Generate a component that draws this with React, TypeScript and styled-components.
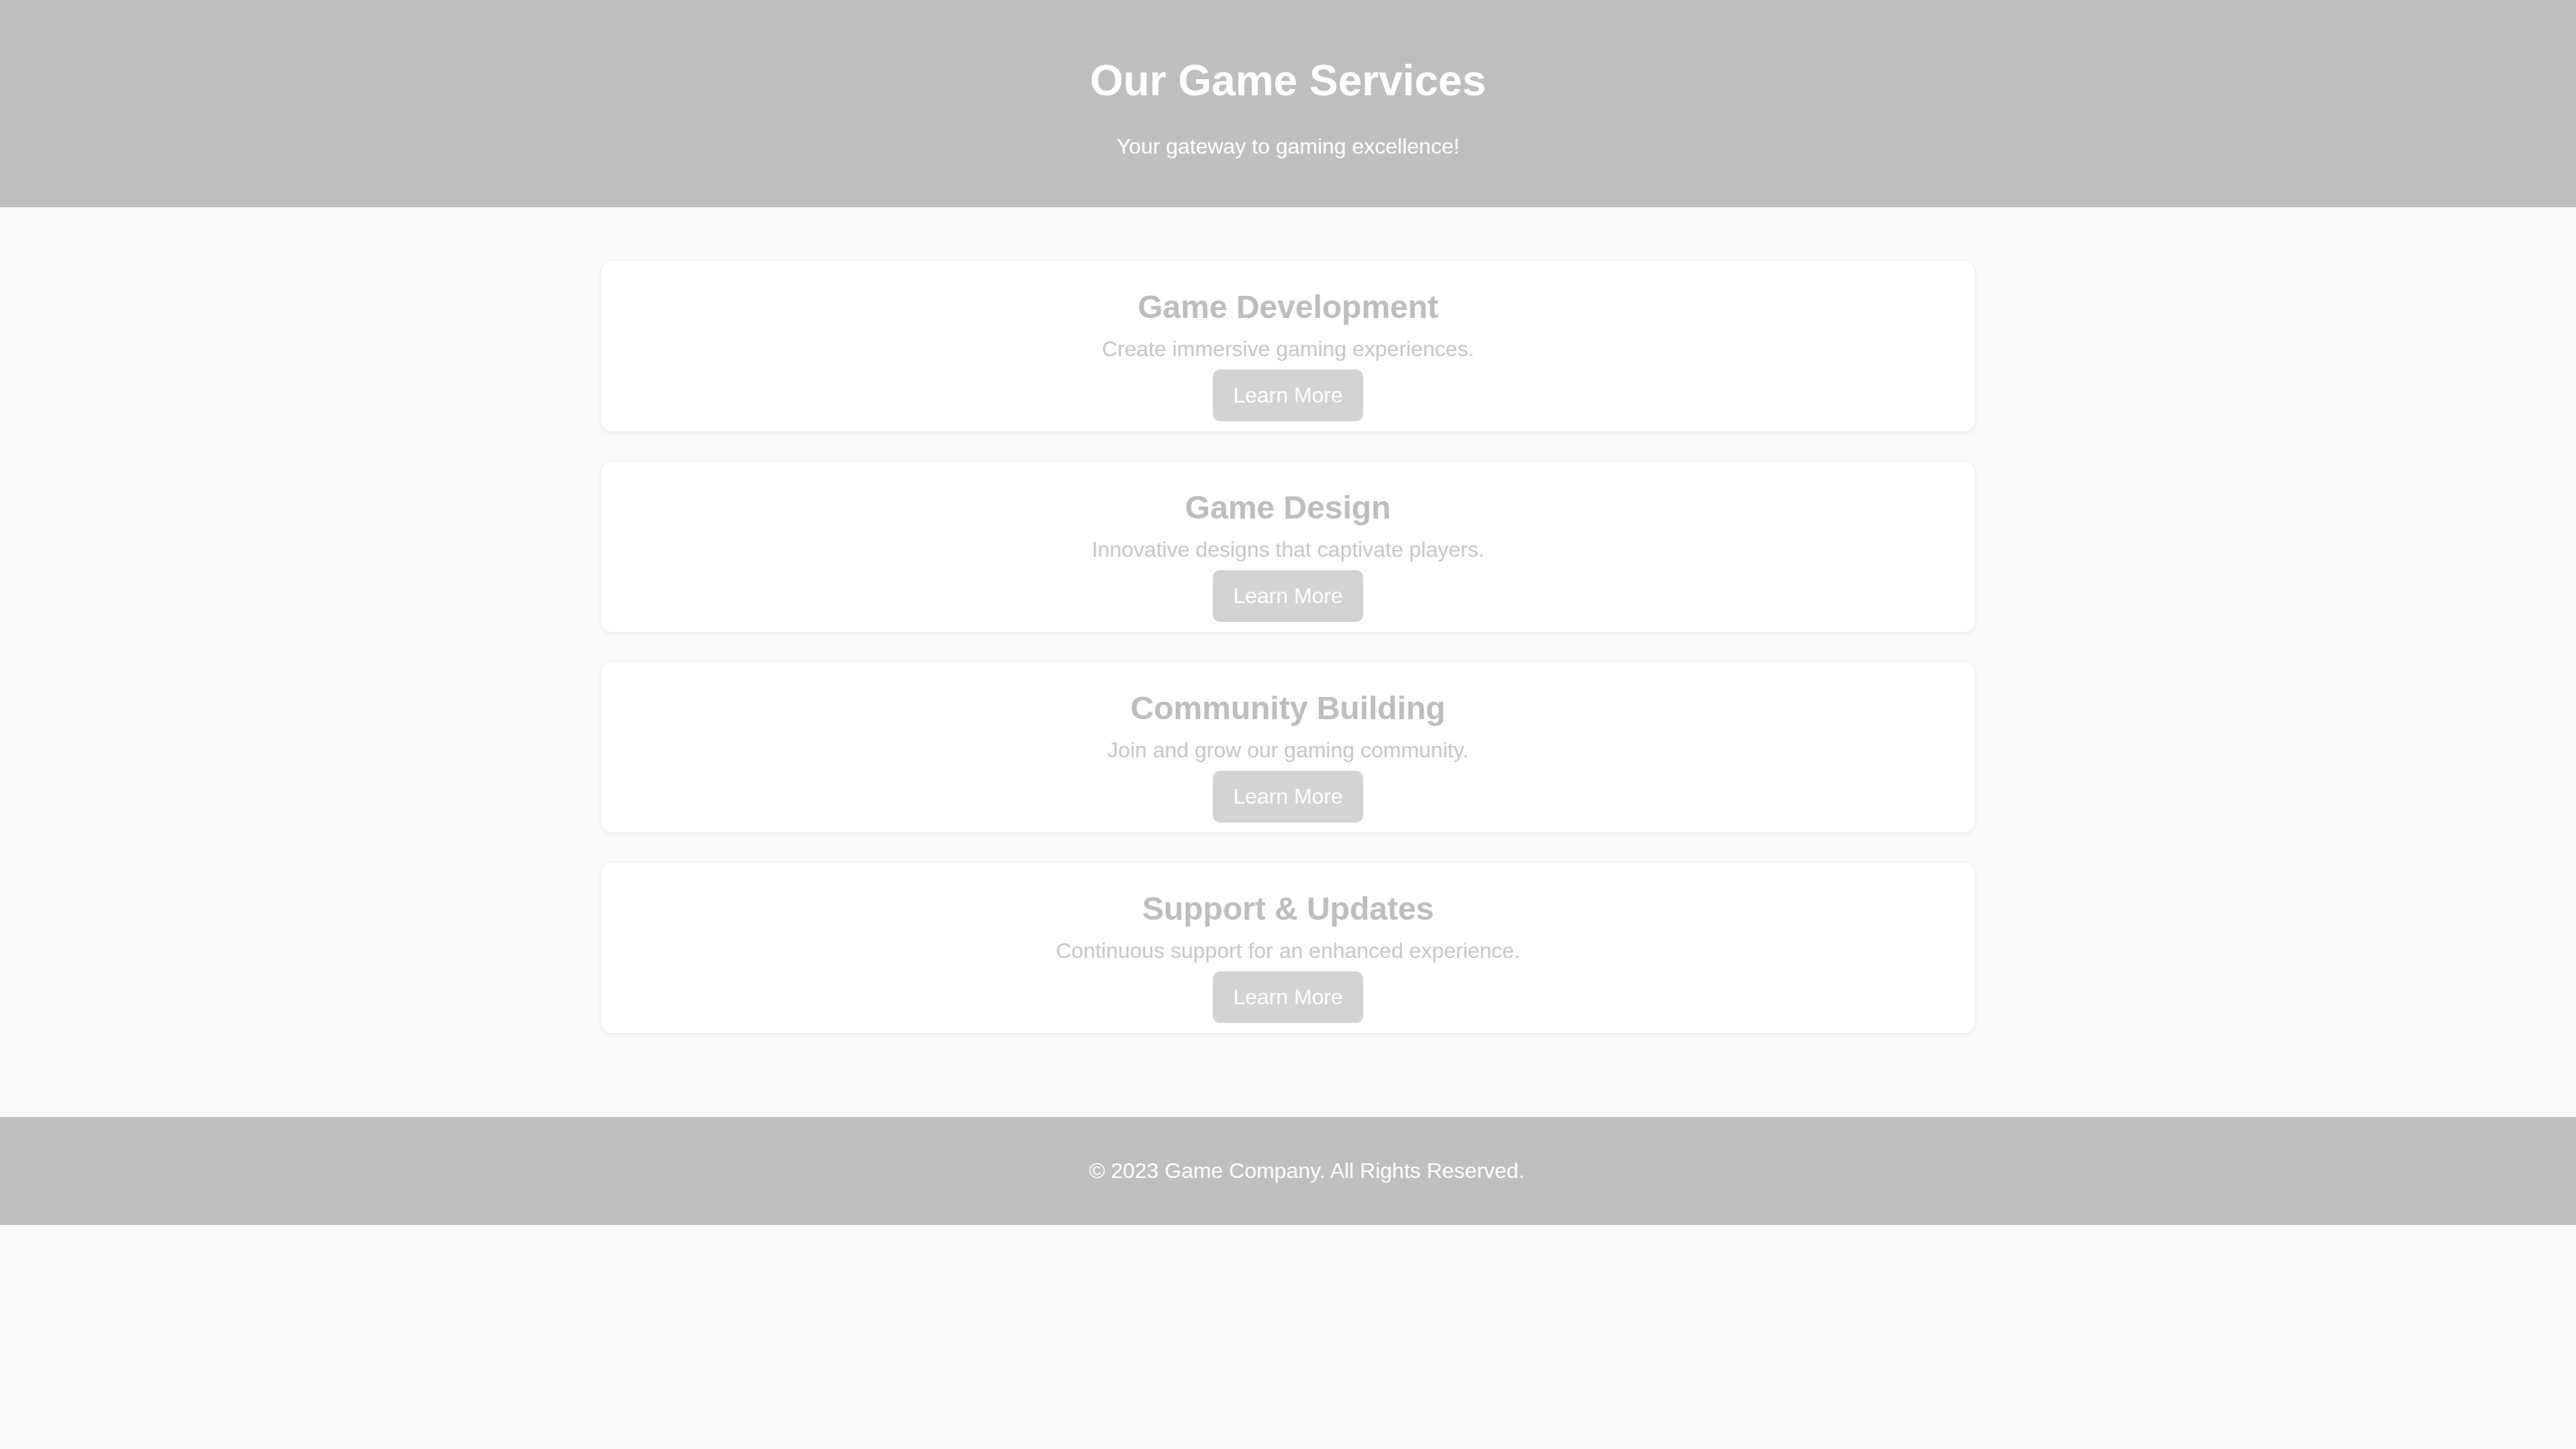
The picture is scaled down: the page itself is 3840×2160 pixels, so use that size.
import React from "react";
import styled, { createGlobalStyle } from "styled-components";

const GlobalStyle = createGlobalStyle`
  html, body {
    margin: 0;
    padding: 0;
    background: #fafafa;
    font-family: "Liberation Sans", Arial, sans-serif;
  }
  * { box-sizing: border-box; }
`;

const Page = styled.div`
  display: flex;
  flex-direction: column;
  width: 100%;
`;

const Header = styled.header`
  background: #bebebe;
  color: #ffffff;
  text-align: center;
  padding: 40px;
`;

const HeaderTitle = styled.h1`
  font-size: 64px;
  font-weight: 700;
  line-height: normal;
  margin: 43px 0;
`;

const HeaderTagline = styled.p`
  font-size: 32px;
  line-height: normal;
  margin: 0 0 32px;
`;

const Main = styled.main`
  display: flex;
  flex-direction: column;
  align-items: center;
  gap: 45px;
  padding: 80px 0 125px;
`;

const Card = styled.section`
  width: 2048px;
  background: #ffffff;
  border-radius: 16px;
  box-shadow: 0 3px 8px rgba(0, 0, 0, 0.06), 0 0 0 1px rgba(0, 0, 0, 0.025);
  padding: 41px 40px 15px;
  display: flex;
  flex-direction: column;
  align-items: center;
  text-align: center;
`;

const CardTitle = styled.h2`
  font-size: 48px;
  font-weight: 700;
  line-height: normal;
  color: #bdbdbd;
  margin: 0 0 17px;
`;

const CardText = styled.p`
  font-size: 32px;
  line-height: normal;
  color: #c7c7c7;
  margin: 0 0 12px;
`;

const LearnButton = styled.button`
  font-family: "Liberation Sans", Arial, sans-serif;
  font-size: 32px;
  line-height: normal;
  color: #ffffff;
  background: #d3d3d3;
  border: none;
  border-radius: 10px;
  padding: 20px 30px;
  cursor: pointer;
`;

const Footer = styled.footer`
  background: #bebebe;
  color: #ffffff;
  text-align: center;
  padding: 30px 30px 30px 86px;
`;

const FooterText = styled.p`
  font-size: 32px;
  line-height: normal;
  margin: 32px 0;
`;

const services = [
  { title: "Game Development", text: "Create immersive gaming experiences." },
  { title: "Game Design", text: "Innovative designs that captivate players." },
  { title: "Community Building", text: "Join and grow our gaming community." },
  { title: "Support & Updates", text: "Continuous support for an enhanced experience." },
];

export default function App() {
  return (
    <>
      <GlobalStyle />
      <Page>
        <Header>
          <HeaderTitle>Our Game Services</HeaderTitle>
          <HeaderTagline>Your gateway to gaming excellence!</HeaderTagline>
        </Header>
        <Main>
          {services.map((s) => (
            <Card key={s.title}>
              <CardTitle>{s.title}</CardTitle>
              <CardText>{s.text}</CardText>
              <LearnButton type="button">Learn More</LearnButton>
            </Card>
          ))}
        </Main>
        <Footer>
          <FooterText>© 2023 Game Company. All Rights Reserved.</FooterText>
        </Footer>
      </Page>
    </>
  );
}
